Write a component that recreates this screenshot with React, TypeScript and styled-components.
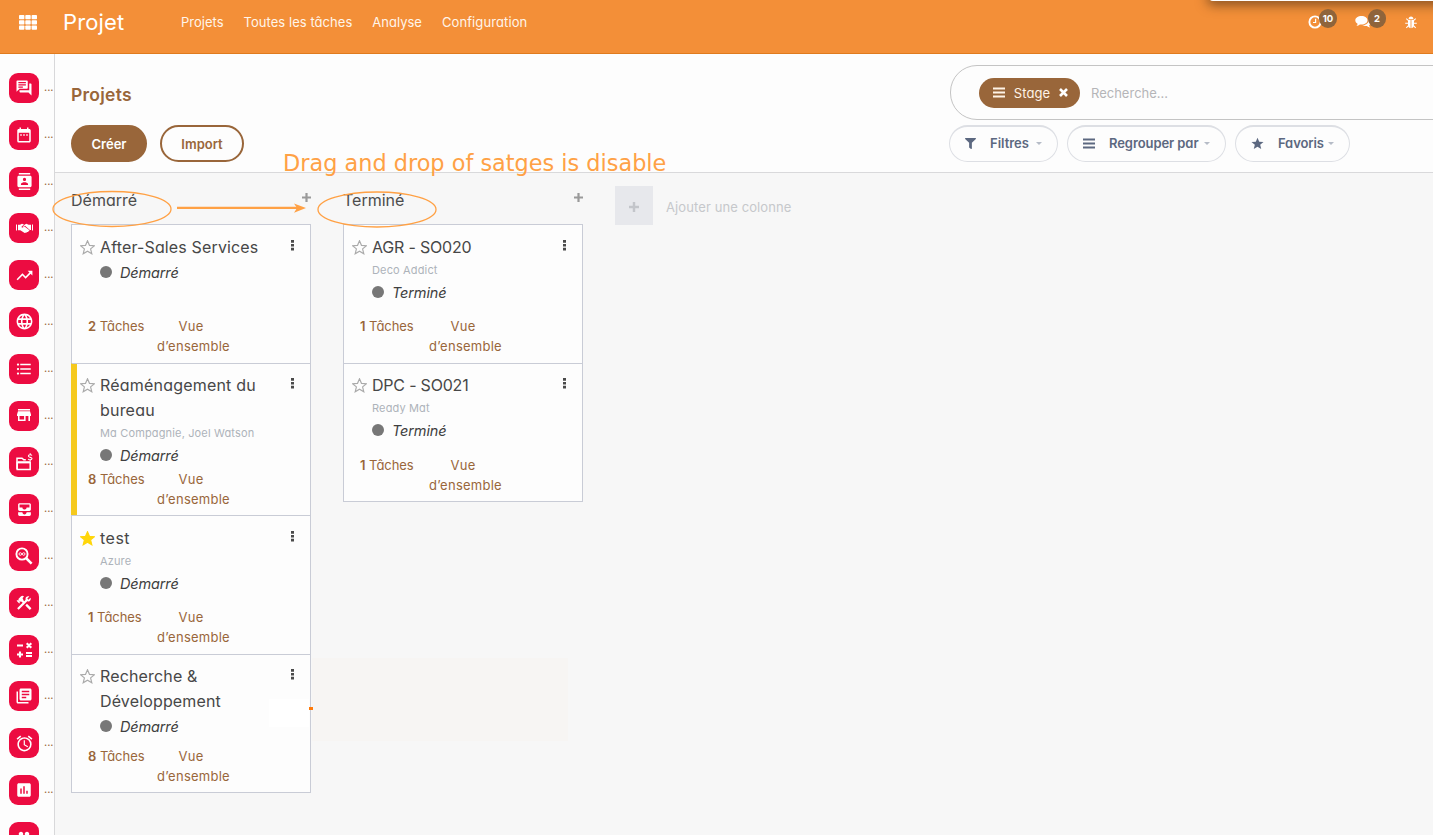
import React from "react";
import styled, { createGlobalStyle, css } from "styled-components";
import {
  MdForum, MdDateRange, MdContacts, MdTrendingUp, MdLanguage, MdFormatListBulleted,
  MdAllInbox, MdConstruction, MdLibraryBooks, MdAlarm, MdInsertChart, MdPeople,
} from "react-icons/md";
import { FaFilter } from "react-icons/fa";

const brown = "#99663a";
const line = "#c9ccd6";
const annot = "#ffa145";

const Global = createGlobalStyle`
  * { box-sizing: border-box; }
  body {
    margin: 0;
    background: #fff;
    font-family: Inter, "Open Sans", sans-serif;
    font-feature-settings: "cv11", "calt" 0;
    overflow: hidden;
  }
`;

const Screen = styled.div`
  position: relative;
  width: 1433px;
  height: 835px;
  overflow: hidden;
  display: flex;
  flex-direction: column;
  background: #f7f7f7;
  white-space: nowrap;
`;

const T = styled.span<{ $ls?: number }>`
  letter-spacing: ${(p) => p.$ls ?? 0}px;
`;

/* Top bar */
const Navbar = styled.header`
  flex: none;
  height: 54px;
  background: #f38f38;
  border-bottom: 1px solid #e07b1e;
  display: flex;
  color: #fff;
  padding: 0 16px 9px 19px;
  align-items: center;
`;
const AppsIcon = styled.svg`
  width: 18px;
  height: 15px;
  margin-right: 26px;
  fill: #fff;
`;
const Brand = styled.h1`
  width: 118px;
  margin: 0;
  font-size: 22px;
  font-weight: 400;
  line-height: 30px;
`;
const Menu = styled.nav`
  display: flex;
  gap: 20px;
  font-size: 13px;
  color: #fff5ea;
`;
const Systray = styled.div`
  margin-left: auto;
  display: flex;
  align-items: center;
  height: 22px;
`;
const Tray = styled.div<{ $w: number }>`
  width: ${(p) => p.$w}px;
  height: 19px;
  margin-top: -5px;
  display: flex;
  align-items: flex-end;
`;
const Badge = styled.span`
  width: 18px;
  height: 19px;
  border-radius: 9px;
  margin: 0 0 1px -4px;
  background: #8f643b;
  color: #fff;
  font-size: 9.5px;
  font-weight: 700;
  line-height: 20px;
  text-align: center;
  z-index: 1;
`;
const Popup = styled.div`
  position: absolute;
  top: -9px;
  left: 1209px;
  width: 240px;
  height: 10px;
  border-radius: 4px;
  background: #fff;
  box-shadow: 0 2px 12px 2px rgba(60, 40, 20, 0.6);
`;

const Body = styled.div`
  flex: 1;
  display: flex;
  min-height: 0;
`;

/* Side bar */
const Sidebar = styled.aside`
  flex: none;
  width: 55px;
  background: #fdfdfd;
  border-right: 1px solid #d8d8da;
  padding: 19px 0 0 9px;
  overflow: hidden;
`;
const SideItem = styled.div`
  display: flex;
  height: 46.8px;
  color: ${brown};
`;
const Tile = styled.div`
  flex: none;
  width: 30px;
  height: 30px;
  border-radius: 9px;
  background: #ec0c41;
  color: #fff;
  display: grid;
  place-items: center;
  margin-right: 5px;
  svg { display: block; }
`;
const Dots = styled.span`
  font-size: 11px;
  line-height: 28px;
`;

/* Control panel */
const Main = styled.main`
  flex: 1;
  min-width: 0;
  display: flex;
  flex-direction: column;
`;
const Panel = styled.section`
  flex: none;
  height: 119px;
  background: #fdfdfd;
  border-bottom: 1px solid #d9d9db;
  display: flex;
  justify-content: space-between;
`;
const PanelLeft = styled.div`
  padding: 30px 0 0 16px;
`;
const PageTitle = styled.h2`
  margin: 0 0 20px;
  font-size: 17.5px;
  line-height: 21px;
  font-weight: 600;
  color: ${brown};
`;
const Buttons = styled.div`
  display: flex;
  gap: 13px;
`;
const Button = styled.button<{ $w: number; $primary?: boolean }>`
  width: ${(p) => p.$w}px;
  height: 37px;
  border-radius: 19px;
  border: 2px solid ${brown};
  padding: 1px 0 0;
  background: ${(p) => (p.$primary ? brown : "#fdfdfd")};
  color: ${(p) => (p.$primary ? "#fff" : brown)};
  font-family: inherit;
  font-feature-settings: inherit;
  font-size: 13px;
  font-weight: 600;
`;
const PanelRight = styled.div`
  width: 484px;
  padding-top: 11px;
`;
const Search = styled.div`
  height: 55px;
  margin: 0 -4px 5px 1px;
  padding-left: 28px;
  border: 1px solid #c4c4c4;
  border-radius: 27px 0 0 27px;
  display: flex;
  align-items: center;
  font-size: 13px;
  color: #b5b5b8;
`;
const Facet = styled.div`
  width: 101px;
  height: 30px;
  margin-right: 11px;
  padding: 0 12px 0 14px;
  border-radius: 15px;
  background: ${brown};
  color: #fff3e6;
  display: flex;
  align-items: center;
  justify-content: space-between;
`;
const Filters = styled.div`
  display: flex;
  gap: 9px;
`;
const Filter = styled.div<{ $w: number }>`
  width: ${(p) => p.$w}px;
  height: 37px;
  border: 1px solid #dddfe4;
  border-top-width: 2px;
  border-radius: 19px;
  padding: 0 15px 2px 15px;
  display: flex;
  align-items: center;
  color: #5c6880;
  font-size: 13px;
  font-weight: 600;
  svg { flex: none; }
`;
const FilterLabel = styled(T)`
  margin: 0 auto 0 14px;
`;
const Caret = styled.i`
  border: 3px solid transparent;
  border-top-color: #b6bcc7;
  border-bottom: 0;
`;

/* Kanban */
const Board = styled.section`
  flex: 1;
  display: flex;
  gap: 32px;
  padding: 13px 0 0 16px;
`;
const Column = styled.div`
  width: 240px;
`;
const ColumnHead = styled.div`
  height: 38px;
  display: flex;
  justify-content: space-between;
  font-size: 16px;
  line-height: 28px;
  color: #4c4c4c;
  svg { margin-top: 7px; }
`;
const Card = styled.article<{ $h: number; $accent?: boolean; $tight?: boolean }>`
  height: ${(p) => p.$h}px;
  margin-bottom: -1px;
  border: 1px solid ${line};
  background: #fdfdfd;
  padding: ${(p) => (p.$tight ? "9px 13px 6px 8px" : "10px 13px 7px 8px")};
  display: grid;
  grid-template-columns: 20px 1fr 6px;
  grid-template-rows: 1fr auto;
  ${(p) => p.$accent && css`box-shadow: inset 5px 0 #f5c91d; border-left-color: #f5c91d;`}
`;
const CardText = styled.div``;
const CardTitle = styled.div`
  font-size: 16px;
  line-height: 25px;
  color: #474747;
`;
const Customer = styled.div`
  font-size: 11px;
  line-height: 20px;
  letter-spacing: 0.15px;
  color: #adb3ba;
`;
const Stage = styled.div`
  display: flex;
  align-items: center;
  gap: 8px;
  height: 24px;
  font-size: 14.5px;
  letter-spacing: -0.15px;
  font-style: italic;
  color: #3f3f3f;
  &::before {
    content: "";
    width: 12px;
    height: 12px;
    border-radius: 50%;
    background: #777;
    margin-bottom: 1px;
  }
`;
const Footer = styled.div`
  grid-column: 1 / -1;
  display: flex;
  padding-left: 8px;
  font-size: 13px;
  line-height: 19.5px;
  color: ${brown};
`;
const Tasks = styled.div`
  width: 69px;
  letter-spacing: -0.05px;
  b { font-weight: 600; }
`;
const Overview = styled.div`
  width: 73px;
  text-align: center;
  letter-spacing: 0.25px;
  & > span:first-child { margin-right: 5px; }
`;
const AddColumn = styled.div`
  display: flex;
  align-items: center;
  height: 39px;
  gap: 13px;
  color: #c6c8cb;
  font-size: 13px;
  span { margin-top: 2px; }
`;
const AddBox = styled.div`
  width: 38px;
  height: 39px;
  padding-top: 2px;
  background: #e7e8ec;
  display: grid;
  place-items: center;
`;

/* Annotations over the board */
const Overlay = styled.svg`
  position: absolute;
  inset: 0;
  pointer-events: none;
`;
const Note = styled.div`
  position: absolute;
  left: 283px;
  top: 149px;
  font: 22.4px/29px "DejaVu Sans", sans-serif;
  color: ${annot};
`;
const Residue = styled.div`
  position: absolute;
  left: 312px;
  top: 658px;
  width: 256px;
  height: 83px;
  background: #f7f5f3;
`;
const Patch = styled.div`
  position: absolute;
  left: 269px;
  top: 699px;
  width: 40px;
  height: 28px;
  background: #fff;
`;

const StarSvg = styled.svg`
  display: block;
  margin-top: 5px;
`;
const KebabSvg = styled.svg`
  display: block;
  margin-top: 5px;
`;

const Plus = ({ s = 9, c = "#9a9a9a" }: { s?: number; c?: string }) => (
  <svg width={s} height={s} viewBox="0 0 9 9"><path d="M3.4 0h2.2v3.4H9v2.2H5.6V9H3.4V5.6H0V3.4h3.4z" fill={c} /></svg>
);
const Bars = () => (
  <svg width="12" height="11" viewBox="0 0 12 11" fill="currentColor"><path d="M0 .5h12v2H0zM0 4.5h12v2H0zM0 8.5h12v2H0z" /></svg>
);
const starPath = "M8 .8l2.1 4.9 5.3.4-4.1 3.4 1.3 5.2L8 11.9l-4.6 2.8 1.3-5.2L.6 6.1l5.3-.4z";
const Star = ({ on }: { on?: boolean }) => (
  <StarSvg width="15" height="15" viewBox="0 0 16 16">
    <path d={starPath} fill={on ? "#ffd60a" : "none"} stroke={on ? "#ffd60a" : "#aaa"} strokeWidth="1.2" />
  </StarSvg>
);
const Kebab = () => (
  <KebabSvg width="4" height="11" viewBox="0 0 4 11">
    <path d="M0 0h3v2.7H0zM0 3.9h3v2.7H0zM0 7.8h3v2.7H0z" fill="#4a4a4a" />
  </KebabSvg>
);

const ChatIcon = () => (
  <svg width="18" height="18" viewBox="0 0 24 24">
    <MdForum size={24} />
    <path d="M4.5 4.8h10M4.5 7.8h10M4.5 10.8h6" stroke="#ec0c41" strokeWidth="1.4" />
  </svg>
);
const HandshakeIcon = () => (
  <svg width="17" height="11" viewBox="0 0 17 11" fill="#fff">
    <path d="M0 1.5h1v6H0zM16 1.5h1v6h-1z" />
    <path d="M2 1.7h2L6 .8l2 .6-2.3 2c-.5.6.3 1.5 1.1 1.100l1.700-1.100 4.700 3.700c.5.5-.1 1.400-.8 1.100.1.700-.7 1.100-1.200.7-.2.700-1 .9-1.500.5-.4.600-1.200.7-1.800.2L4.300 7.200H2z" />
    <path d="M8.900 1.400l1.500-.6 2.200.9H15v5.200h-1.100L9 2.700l-2 1.200-.3-.3z" />
  </svg>
);
const StoreIcon = () => (
  <svg width="14" height="13" viewBox="0 0 14 13" fill="#fff">
    <path d="M1 0h12v1.5H1zM1 2.300h12l1 3.200V7h-1v5h-1.600V7H8.600v5H1V7H0V5.500zM2.500 7v3.600h4.600V7z" fillRule="evenodd" />
  </svg>
);
const ExpenseIcon = () => (
  <svg width="17" height="18" viewBox="0 0 17 18" fill="none" stroke="#fff">
    <path d="M1 16.2V5.2h5l1.8 1.600h2" strokeWidth="1.5" />
    <path d="M1.2 9.2h13v7.2h-13z" strokeWidth="1.5" />
    <path d="M2 9.4h12" strokeWidth="2" />
    <path d="M15.9 2.500c-.4-1-3.500-1.100-3.500.6 0 1.700 3.600.8 3.600 2.500 0 1.700-3.400 1.500-3.800.3M14.200 .3v1.200M14.200 7v1.400" strokeWidth="1.100" />
  </svg>
);
const LensIcon = () => (
  <svg width="18" height="18" viewBox="0 0 18 18" fill="none" stroke="#fff">
    <circle cx="7" cy="7" r="5.6" strokeWidth="1.9" />
    <path d="M11 11l5.6 5.6" strokeWidth="2.5" />
    <circle cx="5.3" cy="7" r="1.3" strokeWidth=".9" />
    <circle cx="8.7" cy="7" r="1.3" strokeWidth=".9" />
  </svg>
);
const CalcIcon = () => (
  <svg width="17" height="16" viewBox="0 0 17 16" stroke="#fff" strokeWidth="2.1">
    <path d="M1 3.5h6M10.700 1.200l4.600 4.600M15.300 1.200l-4.600 4.600M1 12.500h6M4 9.500v6M10 11h6M10 14h6" />
  </svg>
);
const ClockIcon = () => (
  <svg width="15" height="14" viewBox="0 0 15 14" fill="none" stroke="#fff">
    <circle cx="7" cy="7" r="5.6" strokeWidth="1.9" />
    <path d="M7.600 3.800v3.700H5" strokeWidth="1.2" />
  </svg>
);
const CommentsIcon = () => (
  <svg width="17" height="14" viewBox="0 0 17 14" fill="#fff">
    <path d="M6.500 1C10 1 12.500 2.900 12.500 5.300S10 9.600 6.500 9.600c-.6 0-1.100 0-1.600-.1-1 .8-2.100 1.200-3.500 1.400.7-.7 1.100-1.400 1.200-2.200C1 7.900.300 6.700.300 5.300.300 2.900 3 1 6.500 1z" />
    <path d="M13.500 4c1.500.7 2.500 1.800 2.500 3.200 0 1.200-.7 2.200-1.900 3 .1.800.5 1.500 1.200 2.300-1.400-.2-2.500-.7-3.500-1.500-1.700.2-3.400-.1-4.500-.7 4 0 7-2.500 6.200-6.300z" />
  </svg>
);
const BugIcon = () => (
  <svg width="12" height="13" viewBox="0 0 12 13" fill="none" stroke="#fff">
    <path d="M3.600 3.300C3.600 1.600 4.500.6 6 .6s2.400 1 2.400 2.700z" fill="#fff" stroke="none" />
    <path d="M3 4h2.600v8.200C4 12 3 10.800 3 9zM9 4H6.400v8.200C8 12 9 10.800 9 9z" fill="#fff" stroke="none" />
    <path d="M.2 7.300h3M8.800 7.300h3M1.300 2.700l2.200 2M10.700 2.700l-2.200 2M1.300 11.800l2.200-2.200M10.700 11.800L8.500 9.600" strokeWidth="1.1" />
  </svg>
);

const sideIcons = [
  <ChatIcon />, <MdDateRange size={18} />, <MdContacts size={17} />, <HandshakeIcon />,
  <MdTrendingUp size={19} />, <MdLanguage size={19} />, <MdFormatListBulleted size={18} />, <StoreIcon />,
  <ExpenseIcon />, <MdAllInbox size={17} />, <LensIcon />, <MdConstruction size={18} />, <CalcIcon />,
  <MdLibraryBooks size={18} />, <MdAlarm size={19} />, <MdInsertChart size={18} />, <MdPeople size={18} />,
];

type CardData = { h: number; title: string[]; ls?: number; customer?: string; stage: string; tasks: number; accent?: boolean; star?: boolean; tight?: boolean };
const columns: { name: string; cards: CardData[] }[] = [
  {
    name: "Démarré",
    cards: [
      { h: 140, title: ["After-Sales Services"], ls: 0.15, stage: "Démarré", tasks: 2 },
      { h: 153, title: ["Réaménagement du", "bureau"], ls: 0.2, customer: "Ma Compagnie, Joel Watson", stage: "Démarré", tasks: 8, accent: true, tight: true },
      { h: 140, title: ["test"], ls: 0.5, customer: "Azure", stage: "Démarré", tasks: 1, star: true },
      { h: 139, title: ["Recherche &", "Développement"], ls: 0.15, stage: "Démarré", tasks: 8, tight: true },
    ],
  },
  {
    name: "Terminé",
    cards: [
      { h: 140, title: ["AGR - SO020"], ls: -0.2, customer: "Deco Addict", stage: "Terminé", tasks: 1 },
      { h: 139, title: ["DPC - SO021"], ls: -0.2, customer: "Ready Mat", stage: "Terminé", tasks: 1, tight: true },
    ],
  },
];

export default function App() {
  return (
    <>
      <Global />
      <Screen>
        <Navbar>
          <AppsIcon viewBox="0 0 18 15">
            {[0, 5.2, 10.4].map((y) => [0, 6.3, 12.6].map((x) => (
              <rect key={`${x}-${y}`} x={x} y={y} width="5.4" height="4.3" rx="0.8" />
            )))}
          </AppsIcon>
          <Brand><T $ls={0.15}>Projet</T></Brand>
          <Menu>
            <T>Projets</T><T $ls={0.05}>Toutes les tâches</T><T>Analyse</T><T $ls={0.1}>Configuration</T>
          </Menu>
          <Systray>
            <Tray $w={47}><ClockIcon /><Badge>10</Badge></Tray>
            <Tray $w={50}><CommentsIcon /><Badge>2</Badge></Tray>
            <BugIcon />
          </Systray>
        </Navbar>
        <Body>
          <Sidebar>
            {sideIcons.map((icon, i) => (
              <SideItem key={i}><Tile>{icon}</Tile>{i < 16 && <Dots>...</Dots>}</SideItem>
            ))}
          </Sidebar>
          <Main>
            <Panel>
              <PanelLeft>
                <PageTitle><T $ls={0.25}>Projets</T></PageTitle>
                <Buttons>
                  <Button $w={76} $primary>Créer</Button>
                  <Button $w={84}>Import</Button>
                </Buttons>
              </PanelLeft>
              <PanelRight>
                <Search>
                  <Facet>
                    <Bars /><T $ls={0.1}>Stage</T>
                    <svg width="9" height="9" viewBox="0 0 9 9" stroke="#fff" strokeWidth="2.6"><path d="M1 1l7 7M8 1L1 8" /></svg>
                  </Facet>
                  <T>Recherche...</T>
                </Search>
                <Filters>
                  <Filter $w={109}><FaFilter size={11} /><FilterLabel>Filtres</FilterLabel><Caret /></Filter>
                  <Filter $w={159}><Bars /><FilterLabel $ls={-0.08}>Regrouper par</FilterLabel><Caret /></Filter>
                  <Filter $w={115}>
                    <svg width="13" height="13" viewBox="0 0 16 16" fill="currentColor"><path d={starPath} /></svg>
                    <FilterLabel $ls={-0.1}>Favoris</FilterLabel><Caret />
                  </Filter>
                </Filters>
              </PanelRight>
            </Panel>
            <Board>
              {columns.map((col) => (
                <Column key={col.name}>
                  <ColumnHead><T>{col.name}</T><Plus /></ColumnHead>
                  {col.cards.map((c) => (
                    <Card key={c.title[0]} $h={c.h} $accent={c.accent} $tight={c.tight}>
                      <Star on={c.star} />
                      <CardText>
                        {c.title.map((t) => <CardTitle key={t}><T $ls={c.ls}>{t}</T></CardTitle>)}
                        {c.customer && <Customer>{c.customer}</Customer>}
                        <Stage>{c.stage}</Stage>
                      </CardText>
                      <Kebab />
                      <Footer>
                        <Tasks><b>{c.tasks}</b> Tâches</Tasks>
                        <Overview><span>Vue</span><br /><span>d’ensemble</span></Overview>
                      </Footer>
                    </Card>
                  ))}
                </Column>
              ))}
              <AddColumn>
                <AddBox><Plus s={10} c="#c3c5ca" /></AddBox>
                <T $ls={0.1}>Ajouter une colonne</T>
              </AddColumn>
            </Board>
          </Main>
        </Body>
        <Popup />
        <Residue />
        <Patch />
        <Note>Drag and drop of satges is disable</Note>
        <Overlay width="1433" height="835" fill="none" stroke={annot}>
          <ellipse cx="112" cy="209" rx="59" ry="17.5" strokeWidth="1.3" />
          <ellipse cx="377" cy="209.5" rx="59" ry="17.5" strokeWidth="1.3" />
          <path d="M177 207.800h121" strokeWidth="2.2" />
          <path d="M294 203.500l12 4.600-12 4.600 3-4.600z" fill={annot} stroke="none" />
          <path d="M309 707h4v3h-4z" fill="#ff7a0a" stroke="none" />
        </Overlay>
      </Screen>
    </>
  );
}
